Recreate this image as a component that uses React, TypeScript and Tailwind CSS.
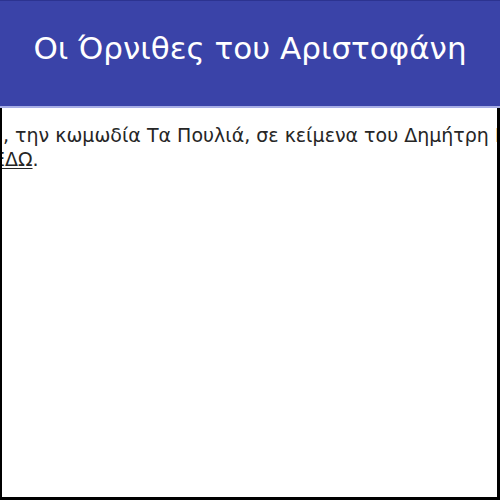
export default function App() {
  return (
    <div className="w-[500px] h-[500px] flex flex-col bg-white overflow-hidden font-['DejaVu_Sans',Verdana,sans-serif]">
      {/* Title bar */}
      <header className="h-[108px] shrink-0 bg-[#3a43a8] border-t border-[#2c3390] border-b-2 border-b-[#a7aee6] flex justify-center pt-[30px]">
        <h1 className="text-white text-[31px] leading-[34px] whitespace-nowrap">
          Οι Όρνιθες του Αριστοφάνη
        </h1>
      </header>

      {/* Article body, cropped on both sides */}
      <main className="flex-1 border-l-2 border-r-[3px] border-b-[3px] border-black overflow-hidden">
        <div className="pt-[15px] text-[19px] leading-[24px] text-[#262626]">
          <div className="whitespace-nowrap ml-px">, την κωμωδία Τα Πουλιά, σε κείμενα του Δημήτρη Ποταμίτη</div>
          <div className="whitespace-nowrap -ml-[9px]">
            <a href="#" className="underline underline-offset-2 text-[#262626]">ΕΔΩ</a>.
          </div>
        </div>
      </main>
    </div>
  );
}
